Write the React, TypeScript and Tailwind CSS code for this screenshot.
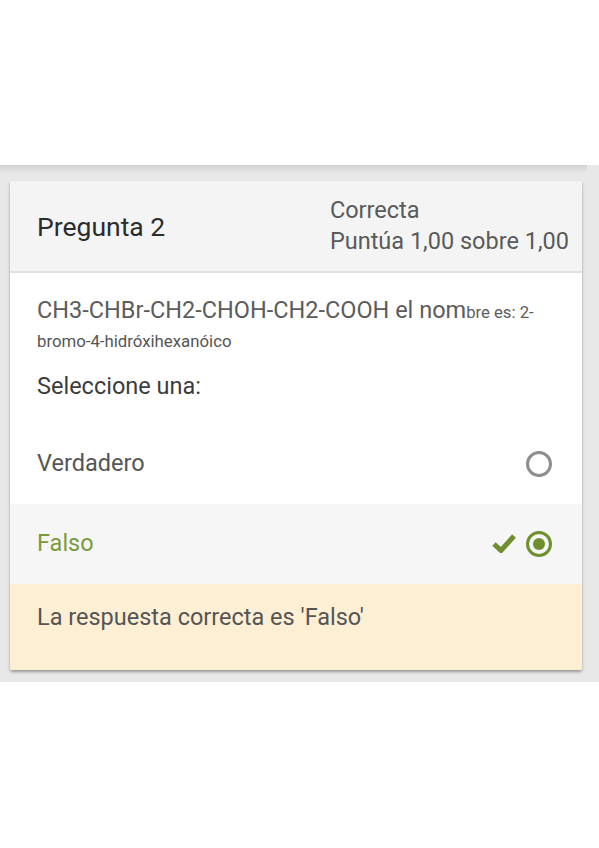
import React from "react";

export default function App() {
  return (
    <div className="w-[599px] h-[848px] bg-white" style={{ fontFamily: "Roboto, 'Liberation Sans', sans-serif" }}>
      <div className="h-[165px] bg-white" />
      <div className="relative bg-[#e8e8e8] pt-[16px] pb-[12px] pl-[10px] pr-[17px]">
        <div className="absolute left-0 right-[12px] top-0 h-[8px] bg-gradient-to-b from-[#d0d0d0] to-[#e8e8e8]" />
        <div className="relative bg-white rounded-[2px] shadow-[0_2px_3px_rgba(0,0,0,0.35)] overflow-hidden">
          <div className="h-[92px] bg-[#f4f4f4] border-b-2 border-[#e2e2e2] flex items-center pl-[27px] pr-[13px]">
            <div className="flex-1 text-[26.5px] text-[#2c2c2c] pt-[2px]">Pregunta 2</div>
            <div className="text-[23.5px] text-[#5a5a5a] leading-[31px] mt-[-1px]">
              <div>Correcta</div>
              <div>Puntúa 1,00 sobre 1,00</div>
            </div>
          </div>
          <div className="pl-[27px] pr-[20px] pt-[22px]">
            <div className="text-[23.5px] text-[#5c5c5c] leading-[30px] whitespace-nowrap">
              CH3-CHBr-CH2-CHOH-CH2-COOH el nom<span className="text-[16.7px]">bre es: 2-</span>
            </div>
            <div className="text-[16.8px] text-[#555] leading-[20px] mt-[3px]">bromo-4-hidróxihexanóico</div>
            <div className="text-[23.5px] text-[#3c3c3c] leading-[30px] mt-[20px]">Seleccione una:</div>
          </div>
          <div className="mt-[23px] h-[80px] flex items-center pl-[27px] pr-[30px]">
            <div className="flex-1 text-[23.5px] text-[#555]">Verdadero</div>
            <div className="w-[26px] h-[26px] rounded-full border-[3px] border-[#8e8e8e]" />
          </div>
          <div className="h-[80px] bg-[#f6f6f7] flex items-center pl-[27px] pr-[30px]">
            <div className="flex-1 text-[23.5px] text-[#7b9a3c]">Falso</div>
            <svg width="24" height="20" viewBox="0 0 24 20" className="mr-[10px] mt-[-2px]">
              <path d="M2 11 L9 17.5 L22 3" fill="none" stroke="#6f8f2f" strokeWidth="5" strokeLinejoin="miter" />
            </svg>
            <div className="w-[26px] h-[26px] rounded-full border-[3px] border-[#6f8f2f] flex items-center justify-center">
              <div className="w-[12px] h-[12px] rounded-full bg-[#6f8f2f]" />
            </div>
          </div>
          <div className="h-[86px] bg-[#fdefd3] flex items-center pl-[27px] pb-[18px]">
            <div className="text-[23.5px] text-[#555]">La respuesta correcta es 'Falso'</div>
          </div>
        </div>
      </div>
    </div>
  );
}
